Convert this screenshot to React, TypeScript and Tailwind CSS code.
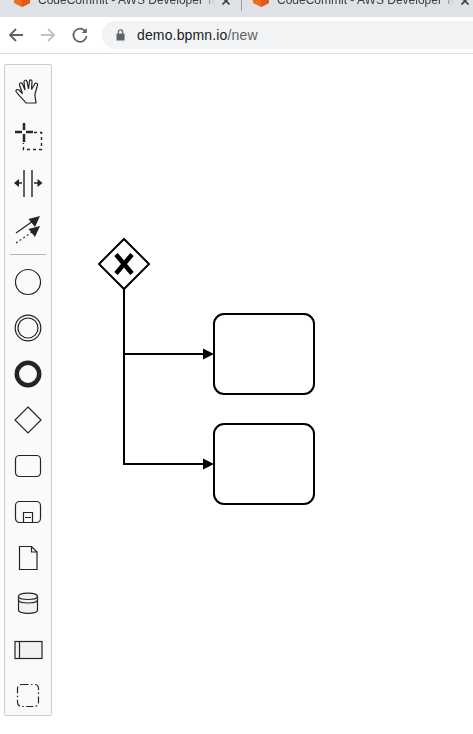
import React from 'react';

const ink = '#22242a';

function Tab({ width, pad }: { width: string; pad: string }) {
  return (
    <div className={`flex h-[17px] shrink-0 items-start overflow-hidden ${width} ${pad}`}>
      <svg width="16" height="17" viewBox="0 0 16 17" className="shrink-0 -translate-y-[9px]">
        <path d="M0 3 L8 0 L16 3 V12 L8 16 L0 12 Z" fill="#ed6c23" />
        <path d="M8 4 L16 3 V12 L8 16 Z" fill="#e05a1c" />
      </svg>
      <span className="ml-2 w-[177px] shrink-0 -translate-y-[8px] overflow-hidden text-[12px] leading-[17px] whitespace-nowrap text-[#3c4043] [mask-image:linear-gradient(to_right,black_93%,transparent)]">
        CodeCommit - AWS Developer Tools
      </span>
      <svg width="8" height="8" viewBox="0 0 8 8" className="ml-[7px] shrink-0 -translate-y-[3px]">
        <path d="M0.5 0.5 L7.5 7.5 M7.5 0.5 L0.5 7.5" stroke="#3c4043" strokeWidth="1.6" fill="none" />
      </svg>
    </div>
  );
}

function ToolButton({ children, mb = 'mb-[10px]' }: { children: React.ReactNode; mb?: string }) {
  return (
    <div className={`flex h-[36px] w-full shrink-0 items-center justify-center ${mb}`}>
      <svg width="30" height="30" viewBox="0 0 30 30" fill="none" stroke={ink} strokeWidth="1.2">
        {children}
      </svg>
    </div>
  );
}

export default function App() {
  return (
    <div className="relative h-[734px] w-[473px] overflow-hidden bg-white font-['Liberation_Sans',sans-serif]">
      {/* browser chrome */}
      <div className="flex h-[17px] bg-[#dee1e6]">
        <Tab width="w-[241px]" pad="pl-[14px]" />
        <div className="h-[11px] w-px shrink-0 bg-[#9aa0a6]" />
        <Tab width="w-[231px]" pad="pl-[11px]" />
      </div>
      <div className="flex h-[37px] items-center border-b border-[#dadce0] bg-white">
        <svg width="18" height="18" viewBox="0 0 18 18" className="ml-[7px]" fill="none" stroke="#5f6368" strokeWidth="1.8">
          <path d="M16 9 H3 M9 3 L3 9 L9 15" />
        </svg>
        <svg width="18" height="18" viewBox="0 0 18 18" className="ml-[14px]" fill="none" stroke="#bdc1c6" strokeWidth="1.8">
          <path d="M2 9 H15 M9 3 L15 9 L9 15" />
        </svg>
        <svg width="18" height="18" viewBox="0 0 18 18" className="ml-[14px]" fill="none" stroke="#5f6368" strokeWidth="1.8">
          <path d="M14.5 5.5 A6.6 6.6 0 1 0 15.6 10" />
          <path d="M15.8 2 V7 H10.8 Z" fill="#5f6368" stroke="none" />
        </svg>
        <div className="ml-[13px] flex h-[28px] flex-1 items-center rounded-l-[14px] bg-[#f1f3f4] pl-[14px]">
          <svg width="9" height="12" viewBox="0 0 9 12" fill="#5f6368">
            <path d="M0.5 4.5 H8.5 V11.5 H0.5 Z" />
            <path d="M2.4 4.5 V3 A2.1 2.1 0 0 1 6.6 3 V4.5" fill="none" stroke="#5f6368" strokeWidth="1.3" />
          </svg>
          <span className="ml-[12px] text-[14px] tracking-[0.15px] text-[#202124]">
            demo.bpmn.io<span className="text-[#5f6368]">/new</span>
          </span>
        </div>
      </div>

      {/* palette */}
      <div className="absolute top-[64px] left-[4px] flex h-[652px] w-[48px] flex-col items-center rounded-[2px] border border-[#cccccc] bg-[#fafafa] pt-[8px]">
        <ToolButton>
          <path d="M13 27 C11 24 6 20 3 15.5 C2.5 13.5 4.5 13 6 14 L9.5 17.5 L6.5 9 C6 7 8.5 6 9.5 8 L12 14 L11 6 C11 4 13.5 3.5 14 5.5 L15.5 13 L16.5 5 C17 3.5 19 3.5 19 5.5 L18.5 13.5 L22 7.5 C23 6.5 25 7.5 24.5 9 L22 18 C21.5 21 23 24 23 27 Z" />
        </ToolButton>
        <ToolButton>
          <path d="M2 10 H9 M13 10 H20 M11 1 V8 M11 12 V20" strokeWidth="2.5" />
          <path d="M21 10.5 H28.5 V27.5 H10.5 V21" strokeDasharray="3 3" strokeWidth="1.4" />
        </ToolButton>
        <ToolButton>
          <path d="M11 2 V29 M19 2 V29" strokeWidth="1.4" />
          <path d="M4 15 H9 M21 15 H26" strokeWidth="1.6" />
          <path d="M1 15 L6 11 V19 Z M29.5 15 L24.5 11 V19 Z" fill={ink} stroke="none" />
        </ToolButton>
        <ToolButton mb="mb-[7px]">
          <path d="M3 19 L20 7" />
          <path d="M27 2 L22 13 L15.5 5 Z" fill={ink} stroke="none" />
          <path d="M3 29 L19 18" strokeDasharray="2 2.4" />
          <path d="M27 12 L22 23 L15.5 15 Z" fill={ink} stroke="none" />
        </ToolButton>
        <div className="mb-[9px] h-px w-[36px] shrink-0 bg-[#b3b3b3]" />
        <ToolButton>
          <circle cx="15" cy="15" r="12.5" />
        </ToolButton>
        <ToolButton>
          <circle cx="15" cy="15" r="12.8" />
          <circle cx="15" cy="15" r="10" />
        </ToolButton>
        <ToolButton>
          <circle cx="15" cy="15" r="11.2" strokeWidth="4.5" />
        </ToolButton>
        <ToolButton>
          <path d="M15 2 L28 15 L15 28 L2 15 Z" />
        </ToolButton>
        <ToolButton>
          <rect x="2.5" y="4.5" width="25" height="21" rx="4" />
        </ToolButton>
        <ToolButton>
          <rect x="2.5" y="4.5" width="25" height="21" rx="4" />
          <path d="M10.5 25.5 V15.5 H19.5 V25.5 M12 20.5 H18" />
        </ToolButton>
        <ToolButton>
          <path d="M6.5 3.5 H18.5 L24 9 V26.5 H6.5 Z M18.5 3.5 V9 H24" />
        </ToolButton>
        <ToolButton>
          <path d="M5.5 7.5 C5.5 3 24.5 3 24.5 7.5 V21 C24.5 25.5 5.5 25.5 5.5 21 Z" fill="#f2f2f2" />
          <path d="M5.5 7.5 C5.5 11.5 24.5 11.5 24.5 7.5 M5.5 11 C5.5 15 24.5 15 24.5 11" />
        </ToolButton>
        <ToolButton>
          <rect x="2" y="6.5" width="27" height="17" fill="#f2f2f2" />
          <path d="M6.5 6.5 V23.5" />
        </ToolButton>
        <ToolButton>
          <rect x="4.5" y="3.5" width="21" height="22" rx="4" strokeDasharray="7 2.5 1.5 2.5" />
        </ToolButton>
      </div>

      {/* diagram */}
      <svg className="absolute top-0 left-0" width="473" height="734" fill="none" stroke="#000" strokeWidth="2">
        <path d="M124 239 L149 264 L124 289 L99 264 Z" fill="#fff" />
        <path d="M116 254.5 L132 273.5 M132 254.5 L116 273.5" strokeWidth="4.6" />
        <path d="M124 289 V464 H206 M124 354 H206" />
        <path d="M214 354 L203 348.5 V359.5 Z M214 464 L203 458.5 V469.5 Z" fill="#000" strokeWidth="0" />
        <rect x="214" y="314" width="100" height="80" rx="10" fill="#fff" />
        <rect x="214" y="424" width="100" height="80" rx="10" fill="#fff" />
      </svg>
    </div>
  );
}
